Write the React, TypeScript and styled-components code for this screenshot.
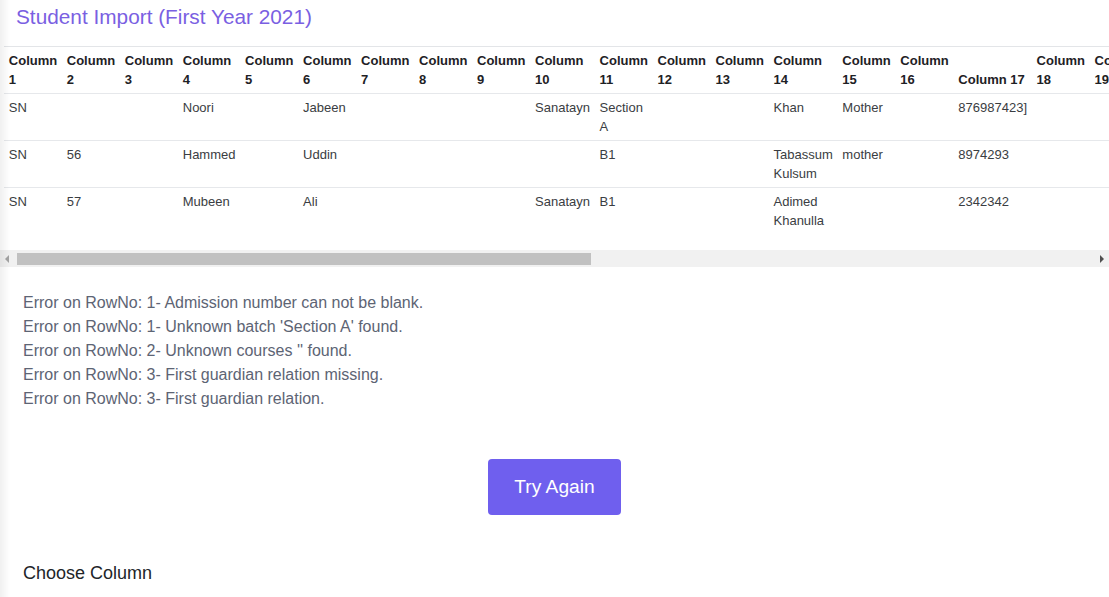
import React, { useLayoutEffect, useRef, useState } from "react";
import styled, { createGlobalStyle } from "styled-components";

const GlobalStyle = createGlobalStyle`
  html, body {
    margin: 0;
    padding: 0;
    background: #ffffff;
  }
  body {
    font-family: "Liberation Sans", Arial, Helvetica, sans-serif;
    color: #212529;
  }
  body::before {
    content: "";
    position: fixed;
    left: 0;
    top: 0;
    bottom: 0;
    width: 10px;
    background: linear-gradient(to right, rgba(0, 0, 0, 0.06), rgba(0, 0, 0, 0));
    pointer-events: none;
    z-index: 10;
  }
  * { box-sizing: border-box; }
`;

const Page = styled.main`
  display: flex;
  flex-direction: column;
  min-height: 597px;
`;

const Title = styled.h1`
  margin: 4px 0 17px 16px;
  font-size: 20.8px;
  line-height: 25px;
  font-weight: 400;
  color: #7a5fe2;
`;

const Scroller = styled.div`
  overflow-x: auto;
  overflow-y: hidden;
  scrollbar-width: none;
  &::-webkit-scrollbar {
    display: none;
  }
`;

const Table = styled.table`
  width: 100%;
  margin: 0 0 16px 4px;
  border-collapse: collapse;
  font-size: 13px;
  line-height: 19px;
`;

const HeadCell = styled.th`
  padding: 4px 4.8px;
  border-top: 1px solid #e3e5e8;
  text-align: left;
  vertical-align: bottom;
  font-weight: 700;
  line-height: 19px;
  color: #1e2125;
`;

const Cell = styled.td`
  padding: 4px 4.8px;
  border-top: 1px solid #e6e8eb;
  vertical-align: top;
  color: #3a3d42;
`;

const Track = styled.div`
  display: flex;
  height: 17px;
  background: #f1f1f1;
`;

const ArrowButton = styled.button`
  flex: none;
  width: 17px;
  height: 17px;
  padding: 0;
  border: 0;
  background: transparent;
  display: flex;
  align-items: center;
  justify-content: center;
  cursor: default;
`;

const Arrow = styled.span<{ $dir: "left" | "right"; $active: boolean }>`
  width: 0;
  height: 0;
  border-top: 4px solid transparent;
  border-bottom: 4px solid transparent;
  ${({ $dir, $active }) =>
    $dir === "left"
      ? `border-right: 4px solid ${$active ? "#505050" : "#a3a3a3"}; margin-right: 3px;`
      : `border-left: 4px solid ${$active ? "#505050" : "#a3a3a3"}; margin-left: 3px;`}
`;

const Rail = styled.div`
  flex: 1;
  display: flex;
  align-items: center;
  padding-top: 1px;
`;

const Thumb = styled.div`
  height: 12px;
  background: #c1c1c1;
`;

const ErrorList = styled.ul`
  list-style: none;
  margin: 24px 0 0 23px;
  padding: 0;
`;

const ErrorLine = styled.li`
  font-size: 16px;
  line-height: 24px;
  color: #5d6474;
`;

const Actions = styled.div`
  display: flex;
  justify-content: center;
  margin-top: 48px;
`;

const PrimaryButton = styled.button`
  height: 56px;
  padding: 0 26.5px;
  border: 0;
  border-radius: 4px;
  background: #6f5fee;
  color: #ffffff;
  font-family: "Liberation Sans", Arial, Helvetica, sans-serif;
  font-size: 19.2px;
  cursor: pointer;
`;

const SectionLabel = styled.h2`
  margin: 45px 0 0 23px;
  font-size: 18px;
  line-height: 27px;
  font-weight: 400;
  color: #212529;
`;

const COLUMN_COUNT = 35;
const columns = Array.from({ length: COLUMN_COUNT }, (_, i) => `Column ${i + 1}`);

type Row = Record<number, string>;

const rows: Row[] = [
  { 1: "SN", 4: "Noori", 6: "Jabeen", 10: "Sanatayn", 11: "Section A", 14: "Khan", 15: "Mother", 17: "876987423]" },
  { 1: "SN", 2: "56", 4: "Hammed", 6: "Uddin", 11: "B1", 14: "Tabassum Kulsum", 15: "mother", 17: "8974293" },
  { 1: "SN", 2: "57", 4: "Mubeen", 6: "Ali", 10: "Sanatayn", 11: "B1", 14: "Adimed Khanulla", 17: "2342342" },
];

const errors = [
  "Error on RowNo: 1- Admission number can not be blank.",
  "Error on RowNo: 1- Unknown batch 'Section A' found.",
  "Error on RowNo: 2- Unknown courses '' found.",
  "Error on RowNo: 3- First guardian relation missing.",
  "Error on RowNo: 3- First guardian relation.",
];

function ImportTable() {
  const scrollRef = useRef<HTMLDivElement>(null);
  const [thumb, setThumb] = useState({ width: 0, left: 0, atStart: true, atEnd: false });

  useLayoutEffect(() => {
    const el = scrollRef.current;
    if (!el) return;
    const update = () => {
      const rail = el.clientWidth - 34;
      const ratio = el.clientWidth / el.scrollWidth;
      setThumb({
        width: rail * ratio,
        left: (rail * el.scrollLeft) / el.scrollWidth,
        atStart: el.scrollLeft <= 0,
        atEnd: el.scrollLeft + el.clientWidth >= el.scrollWidth - 1,
      });
    };
    update();
    el.addEventListener("scroll", update);
    window.addEventListener("resize", update);
    return () => {
      el.removeEventListener("scroll", update);
      window.removeEventListener("resize", update);
    };
  }, []);

  const scrollBy = (dx: number) => scrollRef.current?.scrollBy({ left: dx });

  return (
    <div>
      <Scroller ref={scrollRef}>
        <Table>
          <thead>
            <tr>
              {columns.map((c) => (
                <HeadCell key={c}>{c}</HeadCell>
              ))}
            </tr>
          </thead>
          <tbody>
            {rows.map((row, r) => (
              <tr key={r}>
                {columns.map((_, i) => (
                  <Cell key={i}>{row[i + 1] ?? ""}</Cell>
                ))}
              </tr>
            ))}
          </tbody>
        </Table>
      </Scroller>
      <Track>
        <ArrowButton aria-label="Scroll left" onClick={() => scrollBy(-40)}>
          <Arrow $dir="left" $active={!thumb.atStart} />
        </ArrowButton>
        <Rail>
          <Thumb style={{ width: thumb.width, marginLeft: thumb.left }} />
        </Rail>
        <ArrowButton aria-label="Scroll right" onClick={() => scrollBy(40)}>
          <Arrow $dir="right" $active={!thumb.atEnd} />
        </ArrowButton>
      </Track>
    </div>
  );
}

export default function App() {
  return (
    <>
      <GlobalStyle />
      <Page>
        <Title>Student Import (First Year 2021)</Title>
        <ImportTable />
        <ErrorList>
          {errors.map((e, i) => (
            <ErrorLine key={i}>{e}</ErrorLine>
          ))}
        </ErrorList>
        <Actions>
          <PrimaryButton type="button">Try Again</PrimaryButton>
        </Actions>
        <SectionLabel>Choose Column</SectionLabel>
      </Page>
    </>
  );
}
